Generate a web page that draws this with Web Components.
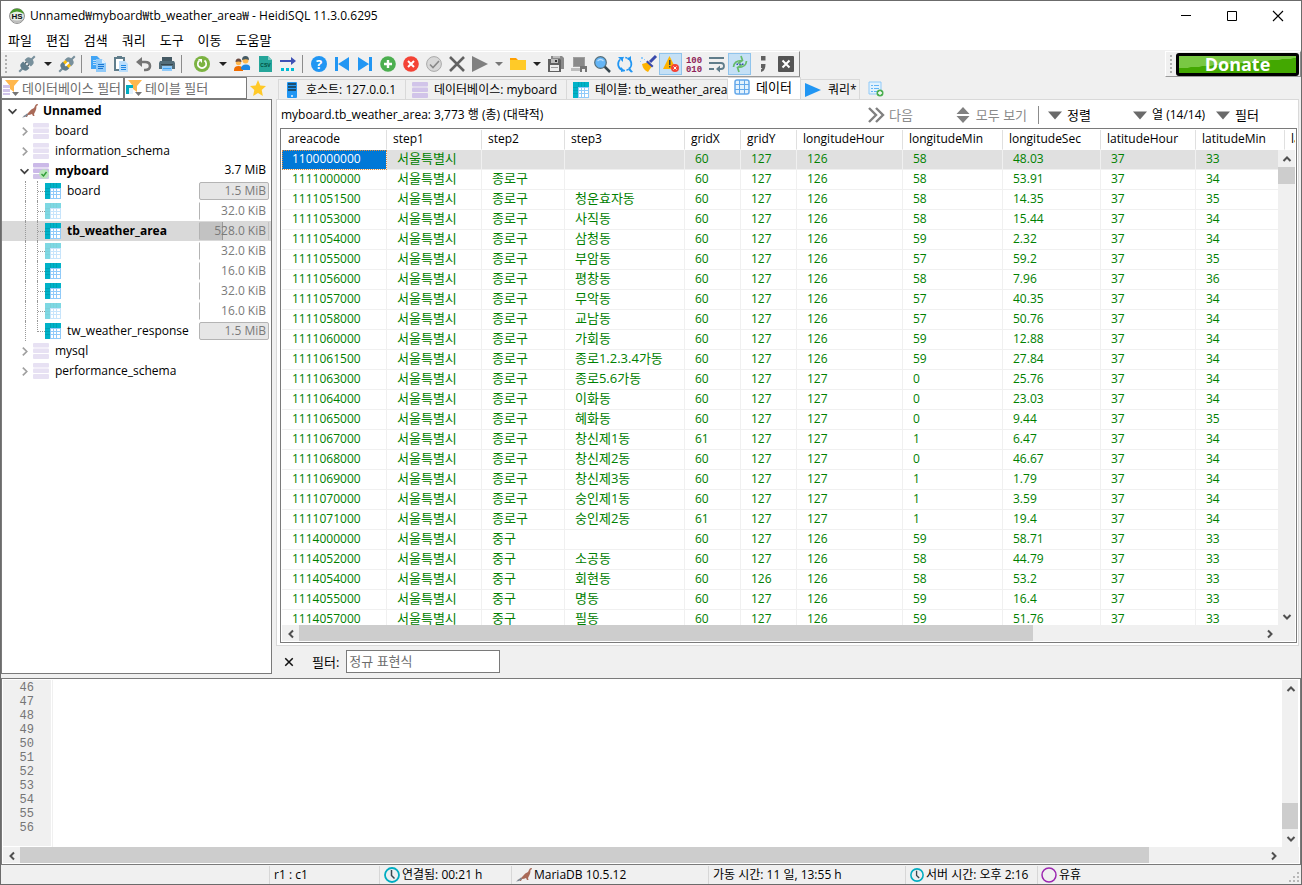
<!DOCTYPE html>
<html lang="ko">
<head>
<meta charset="utf-8">
<title>HeidiSQL</title>
<style>
  body {
    margin: 0;
    font: 12px/16px "Open Sans", "Noto Sans CJK KR", sans-serif;
    color: #000;
    background: #f0f0f0;
  }
</style>
</head>
<body>
<app-window>
  <title-bar slot="title">Unnamed₩myboard₩tb_weather_area₩ - HeidiSQL 11.3.0.6295</title-bar>
  <menu-bar slot="menu"></menu-bar>
  <tool-bar slot="tools"></tool-bar>
  <db-tree slot="side"></db-tree>
  <data-pane slot="main"></data-pane>
  <sql-log slot="log"></sql-log>
  <status-bar slot="status"></status-bar>
</app-window>

<script>
const plug = `<g transform="rotate(45 8 8)"><path d="M7-3h2v5H7zM7 14h2v5H7z" fill="#78909c"/><path d="M3.500 7V4.500Q3.500 1 8 1t4.500 3.500V7z" fill="#78909c"/><path d="M3.500 9v2.500q0 3.500 4.500 3.500t4.500-3.500V9z" fill="#607d8b"/><path d="M5.500 7h1.500v2H5.500zM9 7h1.500v2H9z" fill="#455a64"/>`;
const tableIcon = `<path fill="#fff" d="M0 0h16v16H0z"/><path fill="#90caf9" d="M5 5h11v11H5z"/><path fill="#fff" d="M6 6h2v2H6zM9 6h2v2H9zM12 6h3v2h-3zM6 9h2v2H6zM9 9h2v2H9zM12 9h3v2h-3zM6 12h2v3H6zM9 12h2v3H9zM12 12h3v3h-3z"/><path fill="#00b2c8" d="M0 0h16v5H5v11H0z"/><path d="M5.500 0v5M8.500 0v5M11.500 0v5M0 5.500h5M0 8.500h5M0 11.500h5" stroke="#0097a7" stroke-width=".6"/>`;
const seal = `<path fill="#a96a58" d="M1 13q4-1 6-4 2-3 5-4l1.500-3q1-1.500 2.500-1l-.5 1.500-1 .5q0 3-1 5l-1.500 3 .5 2h-1.500l-1-2q-2 1-4 1l-1 2H3.500l1.500-2q-2 1-4 1z"/><path fill="#7b8793" d="M0 14.500l5-4 1 1.500-3 2z"/>`;
const clock = `<circle cx="8" cy="8" r="7" fill="#eceff1" stroke="#00acc1" stroke-width="1.800"/><path d="M7.500 3v5.500l3 3" fill="none" stroke="#37474f" stroke-width="1.500"/>`;
const funnel = `<path fill="#ffb74d" d="M2 0h14l-5 6v6l-4-3V6z"/><path fill="#757575" d="M9 12h7l-3.500 4z"/>`;

const ICONS = {
  app: `<circle cx="8" cy="8" r="7.400" fill="#e8eee6" stroke="#888"/><path fill="#4a9b2c" d="M1 6a7.300 7.300 0 0 1 14 0Q8 1 1 6z"/><path fill="#bdbdbd" d="M2 11q6 3 12 0-2 4-6 4t-6-4z"/><text x="8" y="11" text-anchor="middle" font-size="8" font-weight="700" font-family="Liberation Sans" fill="#111">HS</text>`,
  plug: plug + `</g>`,
  plug2: plug + `<path fill="#ffc107" d="M4 6.500h8v3H4z"/><path fill="#fff" d="M7 5.500h2v5H7z"/></g>`,
  copy: `<path fill="#42a5f5" d="M1 0h6l3 3v10H1z"/><path fill="#bbdefb" d="M3 4h4v1H3zM3 6h4v1H3zM3 8h4v1H3z"/><path fill="#90caf9" d="M6 3h6l4 4v9H6z"/><path fill="#e3f2fd" d="M12 3l4 4h-4z"/><path fill="#1976d2" d="M8 8h6v1H8zM8 10h6v1H8zM8 12h5v1H8z"/>`,
  paste: `<path fill="#607d8b" d="M1 1h3V0h5v1h3v14H1z"/><path fill="#fff" d="M3 3h7v10H3z"/><path fill="#bbdefb" d="M6 5h6l3 3v8H6z"/><path fill="#1e88e5" d="M8 9h5v1H8zM8 11h5v1H8zM8 13h5v1H8z"/>`,
  undo: `<path fill="none" stroke="#757575" stroke-width="2.600" d="M3 6h6q5 0 5 4t-5 4H8"/><path fill="#757575" d="M0 6l6-5v10z"/>`,
  print: `<path fill="#455a64" d="M3 1h10v4H3z"/><path fill="#546e7a" d="M1 5h14l1 2v6H0V7z"/><path fill="#37474f" d="M2 8h12v1H2z"/><path fill="#90caf9" d="M3 10h10v5H3z"/><path fill="#42a5f5" d="M4 12h8v1H4z"/>`,
  refresh: `<circle cx="8" cy="8" r="8" fill="#7cb342"/><path fill="none" stroke="#fff" stroke-width="1.700" d="M10.500 4.500a4.200 4.200 0 1 1-5 0"/><path fill="#fff" d="M4 3h4v4z"/>`,
  users: `<circle cx="4.500" cy="6.500" r="2.700" fill="#ffb74d"/><path fill="#6d4c41" d="M1.500 6q0-3.500 3-3.500t3 3.500q-3-1-6 0z"/><path fill="#ef6c00" d="M0 14q0-4 4.500-4t4.500 4v1H0z"/><circle cx="11.500" cy="4.500" r="3" fill="#ffb74d"/><path fill="#455a64" d="M8 4q0-4 3.500-4T15 4q-3-1.500-7 0z"/><path fill="#1e88e5" d="M7 13q0-4.500 5-4.500t4 4.500v1H9z"/>`,
  csv: `<path fill="#26a69a" d="M2 0h9l4 4v12H2z"/><path fill="#80cbc4" d="M11 0l4 4h-4z"/><text x="8.500" y="11" text-anchor="middle" font-size="5" font-weight="700" font-family="Liberation Sans" fill="#004d40">CSV</text>`,
  arrows: `<path fill="#3f51b5" d="M0 4h11V1l5 4-5 4V6H0z"/><path fill="#00bcd4" d="M1 12h3v3H1zM6 12h3v3H6zM11 12h3v3h-3z"/>`,
  help: `<circle cx="8" cy="8" r="8" fill="#2196f3"/><text x="8" y="12.500" text-anchor="middle" font-size="13" font-weight="700" font-family="Open Sans" fill="#fff">?</text>`,
  first: `<path fill="#2196f3" d="M1 1h3v14H1zM15 1v14L4 8z"/>`,
  last: `<path fill="#2196f3" d="M12 1h3v14h-3zM1 1v14l11-7z"/>`,
  add: `<circle cx="8" cy="8" r="7.800" fill="#4caf50"/><path fill="#fff" d="M6.800 4h2.400v2.800H12v2.400H9.200V12H6.800V9.200H4V6.800h2.800z"/>`,
  remove: `<circle cx="8" cy="8" r="7.800" fill="#f44336"/><path stroke="#fff" stroke-width="2" d="M5 5l6 6M11 5l-6 6"/>`,
  post: `<circle cx="8" cy="8" r="7.400" fill="#d8d8d8" stroke="#aaa"/><path fill="none" stroke="#888" stroke-width="1.600" d="M4 8.500l3 3L13 5"/>`,
  cancel: `<path stroke="#616161" stroke-width="2.600" d="M1 1l14 14M15 1L1 15"/>`,
  play: `<path fill="#808080" d="M0 0l16 8-16 8z"/>`,
  folder: `<path fill="#ffa000" d="M0 2h6l2 2h7v8H0z"/><path fill="#ffca28" d="M0 4h16v10H0z"/>`,
  save: `<path fill="#8a8a8a" d="M3 0h11l2 2v11H3z"/><path fill="#616161" d="M0 3h12l1 1v12H0z"/><path fill="#bdbdbd" d="M5 0h7v2H5zM3 3h7v4H3z"/><path fill="#eee" d="M2 9h9v6H2z"/><path fill="#9e9e9e" d="M3 11h7v1H3z"/><path fill="#333" d="M7 4h2v2H7z"/>`,
  savedisk: `<path fill="#9e9e9e" d="M2 1h12v10H2z"/><path fill="#8a8a8a" d="M3 2h10v8H3z"/><path fill="#bdbdbd" d="M0 12h10v3H0z"/><path fill="#757575" d="M9 10h7v6H9z"/><path fill="#eee" d="M11 13h3v3h-3z"/>`,
  search: `<path stroke="#37474f" stroke-width="2.500" d="M10 10l6 6"/><circle cx="6.500" cy="6.500" r="5.800" fill="#64b5f6" stroke="#546e7a" stroke-width="1.200"/><path fill="none" stroke="#bbdefb" stroke-width="1.200" d="M3.500 5q3-3 6 0"/>`,
  replace: `<path fill="none" stroke="#2196f3" stroke-width="1.700" d="M5 14A6.500 6.500 0 0 1 3 3.500M10.500 2A6.500 6.500 0 0 1 12.500 12.500"/><path fill="none" stroke="#2196f3" stroke-width="1.500" stroke-dasharray="2 1.500" d="M5 2q2-1 5 0M6 14.500q3 .5 6-1.500"/><path fill="#2196f3" d="M1 1h5v5zM14 5V0l-4 3zM4 16v-5l4 4zM12 11l4 5-2 .5-3-3z"/>`,
  broom: `<path stroke="#3949ab" stroke-width="3" d="M10 6l6-6"/><path fill="#ffb300" d="M2 8l7-2 3 4-4 6q-5-2-6-8z"/><path fill="#3949ab" d="M7.500 4.500l6 5.500-1.500 1.500-6-5.500z"/><path fill="#90caf9" d="M1 1h2v2H1zM4 3h1v1H4zM0 5h1v1H0z"/>`,
  warn: `<path fill="#ffb300" d="M6.500 0L13 13H0z"/><path fill="#37474f" d="M6 4h1.500v5H6zM6 10h1.500v1.500H6z"/><circle cx="12" cy="12" r="4" fill="#f44336"/><path stroke="#fff" d="M10.500 10.500l3 3M13.500 10.500l-3 3"/>`,
  binary: `<text x="8" y="7" text-anchor="middle" font-size="9" font-weight="700" font-family="Liberation Mono" fill="#8e2157">100</text><text x="8" y="16" text-anchor="middle" font-size="9" font-weight="700" font-family="Liberation Mono" fill="#8e2157">010</text>`,
  wrap: `<path fill="none" stroke="#607d8b" stroke-width="1.800" d="M0 2h15M0 7h12q3 0 3 3t-3 3H8M0 13h5"/><path fill="#607d8b" d="M7 13l4-3.500v7z"/>`,
  format: `<path fill="none" stroke="#66bb6a" stroke-width="1.700" d="M1.500 11Q2 4.500 10 4.500M6 7.500l4.500-3L9 0M14.500 5q-.5 6.500-8.500 6.500M10 8.500l-4.500 3L7 16"/><path fill="#3949ab" d="M4.500 7.500h1.500v1.500H4.500zM7.300 7.500h1.500v1.500H7.300zM10 7.500h1.500v1.500H10z"/>`,
  semi: `<path fill="#616161" d="M6 0h4.500v4.500H6zM6 8h4.500q0 7-4.500 8v-2.500l1.500-1.500H6z"/>`,
  close: `<rect width="16" height="16" rx="1" fill="#555"/><path stroke="#fff" stroke-width="2" d="M4.500 4.500l7 7M11.500 4.500l-7 7"/>`,
  star: `<path fill="#ffc928" d="M8 0l2.300 5.400L16 6l-4.300 4 1.200 6L8 13l-4.900 3 1.200-6L0 6l5.700-.6z"/>`,
  dbfilter: funnel + `<path fill="#d1c4e9" d="M0 5h7v3H0zM0 9h7v3H0zM0 13h7v2H0z"/>`,
  tablefilter: funnel + `<path fill="#00acc1" d="M0 5h7v3H3v6H0z"/><path fill="#e3f2fd" d="M3 8h4v6H3z"/>`,
  host: `<rect x="3" width="10" height="16" rx="1" fill="#2196f3"/><path fill="#1b4f72" d="M4 1h8v2H4zM4 4h8v2H4zM4 7h8v2H4z"/><path fill="#bbdefb" d="M7 13h2v2H7z"/>`,
  db: `<rect width="16" height="4.500" rx="1" fill="#d1c4e9"/><rect y="5.500" width="16" height="4.500" rx="1" fill="#d1c4e9"/><rect y="11" width="16" height="5" rx="1" fill="#d1c4e9"/>`,
  dbopen: `<rect width="16" height="4.500" rx="1" fill="#cbb9e8"/><rect y="5.500" width="16" height="4.500" rx="1" fill="#cbb9e8"/><rect y="11" width="16" height="5" rx="1" fill="#d1c4e9"/><circle cx="11" cy="11" r="4.800" fill="#b9e6ba"/><path fill="none" stroke="#2e9c35" stroke-width="1.400" d="M8.500 11l2 2 3-4"/>`,
  table: tableIcon,
  data: `<rect x="1" y="1" width="14" height="14" rx="2" fill="#e3f2fd" stroke="#64a8ea" stroke-width="1.500"/><path stroke="#64a8ea" d="M5.500 1v14M10.500 1v14M1 5.500h14M1 10.500h14"/>`,
  query: `<path fill="#2196f3" d="M0 1l16 7-16 7z"/>`,
  newquery: `<path fill="#e3f2fd" stroke="#90caf9" d="M1 1h12v12H1z"/><path stroke="#64b5f6" d="M3 4.500h2M6 4.500h5M3 7.500h2M6 7.500h5M3 10.500h2M6 10.500h3"/><circle cx="12" cy="12" r="3.500" fill="#4caf50"/><path stroke="#fff" stroke-width="1.300" d="M12 10v4M10 12h4"/>`,
  seal, clock,
  idle: `<circle cx="8" cy="8" r="7" fill="none" stroke="#9c27b0" stroke-width="1.500"/>`,
  next: `<path fill="none" stroke="#808080" stroke-width="2.400" d="M1 1l7 7-7 7M8 1l7 7-7 7"/>`,
  updown: `<path fill="#808080" d="M8 0l6.500 7h-13zM8 16l6.500-7h-13z"/>`,
  down: `<path fill="#6a6a6a" d="M0 4h16l-8 9z"/>`,
  cross: `<path stroke="#111" stroke-width="2.400" d="M2 2l12 12M14 2L2 14"/>`,
  winmin: `<path stroke="#000" stroke-width="1.600" d="M0 7.200h16"/>`,
  winmax: `<path fill="none" stroke="#000" stroke-width="1.600" d="M.8.8h14.400v14.400H.8z"/>`,
  winclose: `<path stroke="#000" stroke-width="1.800" d="M0 0l16 16M16 0L0 16"/>`,
  expand: `<path fill="none" stroke="#404040" stroke-width="3" d="M1 4l7 7 7-7"/>`,
  collapsed: `<path fill="none" stroke="#a0a0a0" stroke-width="3" d="M5 1l7 7-7 7"/>`,
  up: `<path fill="none" stroke="#505050" stroke-width="4" d="M1 12l7-7 7 7"/>`,
  dn: `<path fill="none" stroke="#505050" stroke-width="4" d="M1 4l7 7 7-7"/>`,
  left: `<path fill="none" stroke="#505050" stroke-width="4" d="M12 1L5 8l7 7"/>`,
  right: `<path fill="none" stroke="#505050" stroke-width="4" d="M4 1l7 7-7 7"/>`,
};

class UiIcon extends HTMLElement {
  connectedCallback() {
    const size = this.getAttribute('size') || 16;
    this.attachShadow({ mode: 'open' }).innerHTML = `
      <style>
        :host { display: inline-flex; flex: none; width: ${size}px; height: ${size}px; }
        svg { width: 100%; height: 100%; overflow: visible; }
      </style>
      <svg viewBox="0 0 16 16" aria-hidden="true">${ICONS[this.getAttribute('name')]}</svg>
    `;
  }
}
customElements.define('ui-icon', UiIcon);

class ScrollBar extends HTMLElement {
  connectedCallback() {
    const vertical = this.hasAttribute('vertical');
    const [before, thumb, after] = this.getAttribute('parts').split(' ');
    this.attachShadow({ mode: 'open' }).innerHTML = `
      <style>
        :host {
          display: flex;
          flex-direction: ${vertical ? 'column' : 'row'};
          background: #f0f0f0;
          ${vertical ? 'width: 16px' : 'height: 16px'};
          flex: none;
          min-height: 0;
        }
        button {
          display: flex;
          align-items: center;
          justify-content: center;
          flex: none;
          width: 17px;
          height: 17px;
          border: 0;
          padding: 0;
          background: none;
        }
        .thumb { background: #cdcdcd; }
      </style>
      <button aria-label="back"><ui-icon name="${vertical ? 'up' : 'left'}" size="8"></ui-icon></button>
      <div style="flex: ${before} 0 0"></div>
      <div class="thumb" style="flex: ${thumb} 0 0"></div>
      <div style="flex: ${after} 0 0"></div>
      <button aria-label="forward"><ui-icon name="${vertical ? 'dn' : 'right'}" size="8"></ui-icon></button>
    `;
  }
}
customElements.define('scroll-bar', ScrollBar);

class AppWindow extends HTMLElement {
  connectedCallback() {
    this.attachShadow({ mode: 'open' }).innerHTML = `
      <style>
        :host {
          display: flex;
          flex-direction: column;
          box-sizing: border-box;
          height: 100vh;
          border: 1px solid #6b6b6b;
          overflow: hidden;
        }
        main {
          display: flex;
          gap: 4px;
          flex: 1;
          min-height: 0;
        }
        ::slotted([slot="main"]) { flex: 1; min-width: 0; }
      </style>
      <slot name="title"></slot>
      <slot name="menu"></slot>
      <slot name="tools"></slot>
      <main><slot name="side"></slot><slot name="main"></slot></main>
      <slot name="log"></slot>
      <slot name="status"></slot>
    `;
  }
}
customElements.define('app-window', AppWindow);

class TitleBar extends HTMLElement {
  connectedCallback() {
    this.attachShadow({ mode: 'open' }).innerHTML = `
      <style>
        :host {
          display: flex;
          align-items: center;
          height: 29px;
          padding-left: 8px;
          background: #fff;
        }
        .text { flex: 1; margin-left: 5px; }
        button {
          display: flex;
          align-items: center;
          justify-content: center;
          width: 46px;
          height: 28px;
          border: 0;
          padding: 0;
          background: none;
        }
      </style>
      <ui-icon name="app"></ui-icon>
      <span class="text"><slot></slot></span>
      <button aria-label="Minimize"><ui-icon name="winmin" size="10"></ui-icon></button>
      <button aria-label="Maximize"><ui-icon name="winmax" size="10"></ui-icon></button>
      <button aria-label="Close"><ui-icon name="winclose" size="10"></ui-icon></button>
    `;
  }
}
customElements.define('title-bar', TitleBar);

class MenuBar extends HTMLElement {
  connectedCallback() {
    const items = ['파일', '편집', '검색', '쿼리', '도구', '이동', '도움말'];
    this.attachShadow({ mode: 'open' }).innerHTML = `
      <style>
        :host {
          display: flex;
          gap: 14px;
          height: 20px;
          padding-left: 7px;
          background: #fff;
        }
        button {
          border: 0;
          padding: 0;
          background: none;
          font: inherit;
          font-size: 13px;
          line-height: 20px;
        }
      </style>
      ${items.map(t => `<button>${t}</button>`).join('')}
    `;
  }
}
customElements.define('menu-bar', MenuBar);

class ToolBar extends HTMLElement {
  connectedCallback() {
    // "|" separator, V/v/w drop-down arrows, "+" marks a pressed button
    const items = 'plug V plug2 | copy paste undo print || refresh V users csv arrows | help first last add remove post cancel play w folder v save savedisk search replace broom warn+ binary wrap format+ semi close'.split(' ');
    const html = items.map(name => {
      if (name === '|') return '<i class="sep"></i>';
      if (name === '||') return '<i class="sep wide"></i>';
      if (/^[vwV]$/.test(name)) return `<button class="drop ${name}" aria-label="more"></button>`;
      const on = name.endsWith('+');
      const icon = name.replace('+', '');
      return `<button class="${on ? 'on' : ''}" aria-label="${icon}"><ui-icon name="${icon}"></ui-icon></button>`;
    }).join('');
    this.attachShadow({ mode: 'open' }).innerHTML = `
      <style>
        :host {
          display: flex;
          justify-content: space-between;
          height: 27px;
          box-sizing: border-box;
          padding-top: 1px;
        }
        .bar {
          display: flex;
          align-items: center;
          box-sizing: border-box;
          height: 26px;
          padding-right: 2px;
          border-right: 1px solid #8a8a8a;
          border-bottom: 1px solid #9a9a9a;
          border-top: 1px solid #fff;
        }
        .grip {
          width: 2px;
          height: 18px;
          margin: 0 8px 0 4px;
          background: repeating-linear-gradient(#b0b0b0 0 2px, transparent 2px 4px);
        }
        button {
          display: flex;
          align-items: center;
          justify-content: center;
          box-sizing: border-box;
          width: 23px;
          height: 22px;
          border: 0;
          padding: 0;
          background: none;
        }
        .on { background: #c5e0f5; border: 1px solid #90c4ec; }
        .drop { width: 17px; padding-left: 2px; }
        .drop::before {
          content: "";
          border: 4px solid transparent;
          border-top-color: #222;
          border-bottom: 0;
        }
        .v, .w { width: 15px; padding-left: 0; }
        .w::before { border-top-color: #777; }
        .sep {
          width: 1px;
          height: 18px;
          margin: 0 4px 0 3px;
          background: #8c8c8c;
        }
        .wide { margin-right: 8px; }
        .donate-bar { border-left: 1px solid #fff; padding-right: 1px; }
        .donate {
          width: 123px;
          height: 23px;
          border: 3px solid #000;
          border-radius: 3px;
          background: linear-gradient(175deg, #79c843 0 45%, #43a801 46%);
          color: #fff;
          font: 700 18px/18px "Open Sans", sans-serif;
        }
        .donate-bar .grip { margin-right: 4px; }
      </style>
      <div class="bar"><i class="grip"></i>${html}</div>
      <div class="bar donate-bar"><i class="grip"></i><button class="donate">Donate</button></div>
    `;
  }
}
customElements.define('tool-bar', ToolBar);

class TreeNode extends HTMLElement {
  connectedCallback() {
    const level = Number(this.getAttribute('level') || 0);
    const size = this.getAttribute('size');
    const bar = this.getAttribute('bar');
    const state = this.getAttribute('state');
    this.attachShadow({ mode: 'open' }).innerHTML = `
      <style>
        :host {
          display: flex;
          align-items: center;
          height: 20px;
          padding-right: 2px;
        }
        :host([selected]) { background: #d9d9d9; }
        :host([bold]) .name { font-weight: 700; }
        :host([dim]) ui-icon.kind { opacity: .5; }
        .indent { flex: none; width: ${level * 12}px; }
        .arrow { display: flex; justify-content: ${level ? 'flex-end' : 'center'}; width: ${level ? 15 : 20}px; margin-right: ${level ? 4 : 0}px; }
        .lines { display: flex; flex: none; width: 20px; height: 20px; margin-left: 23px; }
        .lines i { box-sizing: border-box; width: 12px; height: 20px; border-left: 1px dotted #999; }
        .lines i + i { width: 8px; }
        .lines b { display: block; box-sizing: border-box; height: 11px; border-bottom: 1px dotted #999; }
        :host([last]) .lines i + i { height: 11px; }
        .name { flex: 1; margin-left: ${level ? 6 : 5}px; white-space: nowrap; }
        .size {
          box-sizing: border-box;
          width: 70px;
          height: 18px;
          padding-right: 3px;
          text-align: right;
          line-height: 16px;
        }
        .size.barred {
          border: 1px solid transparent;
          border-left-color: #b4b4b4;
          padding-right: 2px;
          color: #7a7a7a;
        }
        .size.filled { border-color: #b4b4b4; border-radius: 2px; background: #e6e6e6; }
        .size.part { background: linear-gradient(90deg, #c2c2c2 0 22px, #999 22px 23px, transparent 23px); }
      </style>
      ${level === 2
        ? `<span class="lines"><i></i><i><b></b></i></span>`
        : `<span class="indent"></span><span class="arrow"><ui-icon name="${state === 'open' ? 'expand' : 'collapsed'}" size="9"></ui-icon></span>`}
      <ui-icon class="kind" name="${this.getAttribute('icon')}"></ui-icon>
      <span class="name"><slot></slot></span>
      ${size ? `<span class="size ${bar ? 'barred ' + bar : ''}">${size}</span>` : ''}
    `;
  }
}
customElements.define('tree-node', TreeNode);

class DbTree extends HTMLElement {
  connectedCallback() {
    this.attachShadow({ mode: 'open' }).innerHTML = `
      <style>
        :host {
          display: flex;
          flex-direction: column;
          flex: none;
          width: 271px;
          padding-bottom: 4px;
        }
        .filters { display: flex; align-items: center; height: 22px; }
        label {
          display: flex;
          align-items: center;
          box-sizing: border-box;
          width: 123px;
          height: 22px;
          border: 1px solid #7a7a7a;
          padding-left: 1px;
          background: #fff;
        }
        input {
          flex: 1;
          min-width: 0;
          border: 0;
          padding: 0 0 1px 3px;
          outline: 0;
          background: none;
          font: inherit;
          font-size: 13px;
        }
        input::placeholder { color: #6d6d6d; opacity: 1; }
        .star { border: 0; padding: 0; margin-left: 3px; background: none; display: flex; }
        .tree {
          flex: 1;
          border: 1px solid #7a7a7a;
          padding: 1px 0;
          background: #fff;
        }
      </style>
      <div class="filters">
        <label><ui-icon name="dbfilter"></ui-icon><input placeholder="데이터베이스 필터" aria-label="데이터베이스 필터"></label>
        <label><ui-icon name="tablefilter"></ui-icon><input placeholder="테이블 필터" aria-label="테이블 필터"></label>
        <button class="star" aria-label="favorites"><ui-icon name="star"></ui-icon></button>
      </div>
      <div class="tree">
        <tree-node icon="seal" state="open" bold>Unnamed</tree-node>
        <tree-node level="1" icon="db" dim>board</tree-node>
        <tree-node level="1" icon="db" dim>information_schema</tree-node>
        <tree-node level="1" icon="dbopen" state="open" bold size="3.7 MiB">myboard</tree-node>
        <tree-node level="2" icon="table" size="1.5 MiB" bar="filled">board</tree-node>
        <tree-node level="2" icon="table" size="32.0 KiB" bar="line" dim></tree-node>
        <tree-node level="2" icon="table" size="528.0 KiB" bar="part" bold selected>tb_weather_area</tree-node>
        <tree-node level="2" icon="table" size="32.0 KiB" bar="line" dim></tree-node>
        <tree-node level="2" icon="table" size="16.0 KiB" bar="line"></tree-node>
        <tree-node level="2" icon="table" size="32.0 KiB" bar="line"></tree-node>
        <tree-node level="2" icon="table" size="16.0 KiB" bar="line" dim></tree-node>
        <tree-node level="2" icon="table" size="1.5 MiB" bar="filled" last>tw_weather_response</tree-node>
        <tree-node level="1" icon="db" dim>mysql</tree-node>
        <tree-node level="1" icon="db" dim>performance_schema</tree-node>
      </div>
    `;
  }
}
customElements.define('db-tree', DbTree);

class DataGrid extends HTMLElement {
  connectedCallback() {
    const columns = [
      ['areacode', 105], ['step1', 95], ['step2', 83], ['step3', 120],
      ['gridX', 56], ['gridY', 56], ['longitudeHour', 106], ['longitudeMin', 100],
      ['longitudeSec', 98], ['latitudeHour', 95], ['latitudeMin', 89], ['latitudeSec', 98],
    ];
    // areacode, step2, step3, gridX, gridY, longitude h/m/s, latitude h/m
    const rows = `1100000000,,,60,127,126,58,48.03,37,33
1111000000,종로구,,60,127,126,58,53.91,37,34
1111051500,종로구,청운효자동,60,127,126,58,14.35,37,35
1111053000,종로구,사직동,60,127,126,58,15.44,37,34
1111054000,종로구,삼청동,60,127,126,59,2.32,37,34
1111055000,종로구,부암동,60,127,126,57,59.2,37,35
1111056000,종로구,평창동,60,127,126,58,7.96,37,36
1111057000,종로구,무악동,60,127,126,57,40.35,37,34
1111058000,종로구,교남동,60,127,126,57,50.76,37,34
1111060000,종로구,가회동,60,127,126,59,12.88,37,34
1111061500,종로구,종로1.2.3.4가동,60,127,126,59,27.84,37,34
1111063000,종로구,종로5.6가동,60,127,127,0,25.76,37,34
1111064000,종로구,이화동,60,127,127,0,23.03,37,34
1111065000,종로구,혜화동,60,127,127,0,9.44,37,35
1111067000,종로구,창신제1동,61,127,127,1,6.47,37,34
1111068000,종로구,창신제2동,60,127,127,0,46.67,37,34
1111069000,종로구,창신제3동,60,127,127,1,1.79,37,34
1111070000,종로구,숭인제1동,60,127,127,1,3.59,37,34
1111071000,종로구,숭인제2동,61,127,127,1,19.4,37,34
1114000000,중구,,60,127,126,59,58.71,37,33
1114052000,중구,소공동,60,127,126,58,44.79,37,33
1114054000,중구,회현동,60,126,126,58,53.2,37,33
1114055000,중구,명동,60,127,126,59,16.4,37,33
1114057000,중구,필동,60,127,126,59,51.76,37,33`.split('\n').map(line => {
      const cells = line.split(',');
      cells.splice(1, 0, '서울특별시');
      return [...cells, ''];
    });
    this.attachShadow({ mode: 'open' }).innerHTML = `
      <style>
        :host {
          display: grid;
          grid-template: 20px minmax(0, 1fr) 16px / minmax(0, 1fr) 17px;
          border: 1px solid #7a7a7a;
          padding: 1px;
          background: #fff;
        }
        .view { grid-area: 1 / 1 / 3 / 3; overflow: hidden; min-height: 0; }
        scroll-bar[vertical] { grid-area: 2 / 2; z-index: 1; width: auto; }
        .foot { grid-area: 3 / 1; }
        .corner { grid-area: 3 / 2; background: #f0f0f0; }
        table { border-collapse: separate; border-spacing: 0; table-layout: fixed; width: 0; }
        th, td {
          box-sizing: border-box;
          height: 20px;
          padding: 0 0 0 10px;
          border-right: 1px solid #f0f0f0;
          border-bottom: 1px solid #f0f0f0;
          line-height: 18px;
          white-space: nowrap;
          text-align: left;
          vertical-align: top;
        }
        th { padding-left: 6px; font-weight: 400; border-right-color: #e0e0e0; border-bottom-color: transparent; }
        td { color: #008000; }
        td:nth-child(2), td:nth-child(3), td:nth-child(4) { font-size: 13px; line-height: 16px; }
        tr.current td { background: #e0e0e0; }
        tr.current td:first-child {
          background: #0078d7;
          color: #fff;
          outline: 1px dotted #e08a3a;
          outline-offset: -1px;
        }
      </style>
      <div class="view">
        <table>
          <colgroup>${columns.map(c => `<col style="width: ${c[1]}px">`).join('')}</colgroup>
          <thead><tr>${columns.map(c => `<th>${c[0]}</th>`).join('')}</tr></thead>
          <tbody>${rows.map((r, i) => `<tr class="${i ? '' : 'current'}">${r.map(v => `<td>${v}</td>`).join('')}</tr>`).join('')}</tbody>
        </table>
      </div>
      <scroll-bar vertical parts="0 17 424"></scroll-bar>
      <scroll-bar class="foot" parts="0 734 228"></scroll-bar>
      <div class="corner"></div>
    `;
  }
}
customElements.define('data-grid', DataGrid);

class DataPane extends HTMLElement {
  connectedCallback() {
    this.attachShadow({ mode: 'open' }).innerHTML = `
      <style>
        :host { display: flex; flex-direction: column; padding-right: 2px; }
        button { display: flex; align-items: center; border: 0; padding: 0; background: none; font: inherit; color: inherit; white-space: nowrap; }
        nav { display: flex; align-items: flex-end; height: 22px; padding-left: 2px; }
        nav button {
          box-sizing: border-box;
          flex: none;
          gap: 6px;
          width: 161px;
          height: 20px;
          padding: 0 0 0 6px;
          border: 1px solid #d9d9d9;
          border-width: 1px 1px 0 0;
        }
        nav button:first-of-type { width: 128px; padding-left: 5px; border-left-width: 1px; }
        nav button.active { width: 73px; height: 22px; padding-bottom: 3px; background: #fff; }
        nav button.query { width: 59px; gap: 7px; padding-left: 4px; }
        nav button.new { width: auto; border: 0; padding-left: 8px; }
        .han { font-size: 13px; }
        .pane {
          display: flex;
          flex-direction: column;
          flex: 1;
          min-height: 0;
          border: 1px solid #d9d9d9;
          padding: 0 1px 2px 3px;
          background: #fff;
        }
        .info { display: flex; align-items: center; flex: none; box-sizing: border-box; height: 28px; padding: 2px 38px 0 0; }
        .info span { flex: 1; padding-left: 1px; white-space: nowrap; }
        .info button { gap: 5px; }
        .info .off { color: #8a8a8a; }
        .info i { width: 1px; height: 18px; margin: 0 9px 0 11px; background: #8c8c8c; }
        .info .skip { margin-right: 42px; }
        .info .near { margin-right: 11px; }
        data-grid { flex: 1; min-height: 0; }
        form { display: flex; align-items: center; flex: none; height: 31px; padding-left: 8px; margin-bottom: 1px; }
        form label { margin: 0 7px 0 18px; font-size: 13px; }
        input {
          box-sizing: border-box;
          width: 154px;
          height: 23px;
          border: 1px solid #7a7a7a;
          padding: 0 2px 2px;
          font: inherit;
          font-size: 13px;
        }
        input::placeholder { color: #6d6d6d; opacity: 1; }
      </style>
      <nav>
        <button><ui-icon name="host"></ui-icon><span>호스트: 127.0.0.1</span></button>
        <button><ui-icon name="db"></ui-icon><span>데이터베이스: myboard</span></button>
        <button><ui-icon name="table"></ui-icon><span>테이블: tb_weather_area</span></button>
        <button class="active han"><ui-icon name="data"></ui-icon>데이터</button>
        <button class="query"><ui-icon name="query"></ui-icon>쿼리*</button>
        <button class="new" aria-label="new query"><ui-icon name="newquery"></ui-icon></button>
      </nav>
      <div class="pane">
        <div class="info">
          <span>myboard.tb_weather_area: 3,773 행 (총) (대략적)</span>
          <button class="off han skip"><ui-icon name="next"></ui-icon>다음</button>
          <button class="off han"><ui-icon name="updown"></ui-icon>모두 보기</button>
          <i></i>
          <button class="han skip"><ui-icon name="down" size="14"></ui-icon>정렬</button>
          <button class="near"><ui-icon name="down" size="14"></ui-icon>열 (14/14)</button>
          <button class="han"><ui-icon name="down" size="14"></ui-icon>필터</button>
        </div>
        <data-grid></data-grid>
      </div>
      <form>
        <button type="button" aria-label="close filter"><ui-icon name="cross" size="10"></ui-icon></button>
        <label for="regex">필터:</label>
        <input id="regex" placeholder="정규 표현식">
      </form>
    `;
  }
}
customElements.define('data-pane', DataPane);

class SqlLog extends HTMLElement {
  connectedCallback() {
    const lines = Array.from({ length: 11 }, (_, i) => `<div>${46 + i}</div>`).join('');
    this.attachShadow({ mode: 'open' }).innerHTML = `
      <style>
        :host {
          display: grid;
          grid-template: minmax(0, 1fr) 16px / 48px minmax(0, 1fr) 17px;
          flex: none;
          box-sizing: border-box;
          height: 187px;
          border: 1px solid #7a7a7a;
          padding: 1px;
          background: #fff;
        }
        .gutter {
          padding: 1px 17px 0 0;
          margin-bottom: 1px;
          background: #f0f0f0;
          color: #757575;
          font: 12px/14px "Liberation Mono", monospace;
          text-align: right;
        }
        .text { border-left: 1px solid #f0f0f0; margin-left: 1px; }
        .foot { grid-area: 2 / 1 / 3 / 3; }
        .corner { background: #f0f0f0; }
      </style>
      <div class="gutter">${lines}</div>
      <div class="text"></div>
      <scroll-bar vertical parts="106 26 1"></scroll-bar>
      <scroll-bar class="foot" parts="0 1129 116"></scroll-bar>
      <div class="corner"></div>
    `;
  }
}
customElements.define('sql-log', SqlLog);

class StatusBar extends HTMLElement {
  connectedCallback() {
    this.attachShadow({ mode: 'open' }).innerHTML = `
      <style>
        :host { display: flex; flex: none; box-sizing: border-box; height: 19px; padding-top: 1px; }
        div {
          display: flex;
          align-items: center;
          gap: 2px;
          box-sizing: border-box;
          flex: none;
          padding-left: 4px;
          border-left: 1px solid #d7d7d7;
          white-space: nowrap;
        }
        div:first-of-type { width: 268px; border: 0; }
        div:last-of-type { flex: 1; padding-left: 3px; }
        svg { align-self: flex-end; width: 10px; height: 10px; margin: 0 2px 2px 0; fill: #b8b8b8; }
      </style>
      <div></div>
      <div style="width: 110px">r1 : c1</div>
      <div style="width: 132px"><ui-icon name="clock"></ui-icon>연결됨: 00:21 h</div>
      <div style="width: 197px"><ui-icon name="seal"></ui-icon>MariaDB 10.5.12</div>
      <div style="width: 197px">가동 시간: 11 일, 13:55 h</div>
      <div style="width: 132px"><ui-icon name="clock" size="14"></ui-icon>서버 시간: 오후 2:16</div>
      <div><ui-icon name="idle"></ui-icon>유휴</div>
      <svg viewBox="0 0 10 10"><path d="M8 0h2v2H8zM4 4h2v2H4zM8 4h2v2H8zM0 8h2v2H0zM4 8h2v2H4zM8 8h2v2H8z"/></svg>
    `;
  }
}
customElements.define('status-bar', StatusBar);
</script>
</body>
</html>
